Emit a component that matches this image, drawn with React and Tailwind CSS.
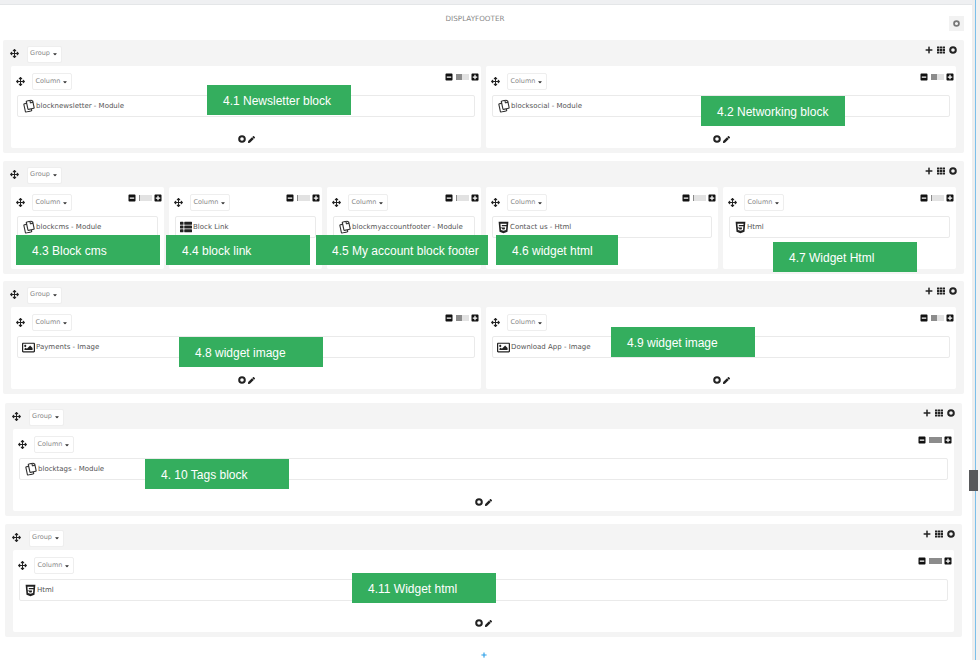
import React from "react";
import {
  FaArrowsAlt,
  FaCaretDown,
  FaHtml5,
  FaMinusSquare,
  FaPen,
  FaPlus,
  FaPlusSquare,
  FaRegCopy,
  FaRegImage,
  FaTh,
  FaThList,
} from "react-icons/fa";

const kindIcons = {
  module: <FaRegCopy className="ml-[1px] mr-[1px] shrink-0 text-[12px] text-[#333] -rotate-12" />,
  html: <FaHtml5 className="shrink-0 text-[13px] text-[#222]" />,
  image: <FaRegImage className="mr-[1px] shrink-0 text-[13px] text-[#222]" />,
  list: <FaThList className="mr-[1px] shrink-0 text-[12px] text-[#222]" />,
};

const labels = [
  { text: "4.1 Newsletter block", cls: "left-[207px] top-[85px] w-[144px]" },
  { text: "4.2 Networking block", cls: "left-[701px] top-[96px] w-[144px]" },
  { text: "4.3 Block cms", cls: "left-[16px] top-[235px] w-[144px]" },
  { text: "4.4 block link", cls: "left-[166px] top-[235px] w-[144px]" },
  { text: "4.5 My account block footer", cls: "left-[316px] top-[235px] w-[172px]" },
  { text: "4.6 widget html", cls: "left-[496px] top-[235px] w-[122px]" },
  { text: "4.7 Widget Html", cls: "left-[773px] top-[242px] w-[144px]" },
  { text: "4.8 widget image", cls: "left-[179px] top-[337px] w-[144px]" },
  { text: "4.9 widget image", cls: "left-[611px] top-[327px] w-[144px]" },
  { text: "4. 10 Tags block", cls: "left-[145px] top-[459px] w-[144px]" },
  { text: "4.11 Widget html", cls: "left-[352px] top-[573px] w-[144px]" },
];

// the settings icon reads as a thick ring at this size
const Ring = ({ className }) => (
  <svg viewBox="0 0 8 8" className={className} fill="none" stroke="currentColor" strokeWidth="2">
    <circle cx="4" cy="4" r="2.8" />
  </svg>
);

const DropButton = ({ label, width }) => (
  <div className={`flex h-[17px] items-center justify-center gap-[2px] rounded-[2px] border border-[#eeeeee] bg-white text-[6.5px] text-[#888] ${width}`}>
    {label}
    <FaCaretDown className="text-[6px] text-[#333]" />
  </div>
);

const WidthBar = ({ level }) => (
  <div className="flex h-[6px] w-[13px] bg-[#e2e2e2]">
    <div className="h-full bg-[#8c8c8c]" style={{ width: `${level * 100}%` }} />
  </div>
);

const Column = ({ width, level, name, kind }) => (
  <div className={`flex h-[82px] flex-col rounded-[2px] bg-white px-[6px] pt-[7px] ${width}`}>
    <div className="flex items-start justify-between">
      <div className="-ml-[1.5px] flex items-center gap-[7.5px]">
        <FaArrowsAlt className="-mt-[1px] text-[9px] text-[#222]" />
        <DropButton label="Column" width="w-[40px]" />
      </div>
      <div className="-mr-[4px] -mt-[0.5px] flex items-center gap-[2.5px]">
        <FaMinusSquare className="text-[8px] text-[#111]" />
        <WidthBar level={level} />
        <FaPlusSquare className="text-[8px] text-[#111]" />
      </div>
    </div>
    <div className="mt-[5px] flex h-[22px] items-center rounded-[2px] border border-[#eaeaea] bg-white pl-[4px] text-[7px] text-[#555]">
      {kindIcons[kind]}
      <span className="whitespace-nowrap">{name}</span>
    </div>
    <div className="mt-[18px] flex items-center justify-center gap-[2px] text-[#222]">
      <Ring className="h-[8px] w-[8px]" />
      <FaPen className="text-[7px]" />
    </div>
  </div>
);

const Group = ({ className, children }) => (
  <section className={`rounded-[2px] bg-[#f4f4f4] px-[8px] pb-[5px] ${className}`}>
    <div className="flex h-[26px] items-center justify-between">
      <div className="-ml-[1px] mt-[2px] flex items-center gap-[7.5px]">
        <FaArrowsAlt className="-mt-[2px] text-[9px] text-[#222]" />
        <DropButton label="Group" width="w-[35px]" />
      </div>
      <div className="mb-[6px] -mr-[1px] flex items-center gap-[4px] text-[#222]">
        <FaPlus className="text-[8px]" />
        <FaTh className="text-[8px]" />
        <Ring className="h-[8px] w-[8px]" />
      </div>
    </div>
    <div className="flex gap-[5px]">{children}</div>
  </section>
);

export default function App() {
  return (
    <div className="relative flex h-[660px] w-[980px] overflow-hidden bg-white font-['DejaVu_Sans',sans-serif]">
      <main className="w-[972px]">
        <div className="h-[5px] border-b border-[#e4e6e8] bg-[#eff0f2]" />
        <header className="relative flex h-[35px] justify-center pt-[9px] pr-[22px] text-[7.2px] text-[#888]">
          DISPLAYFOOTER
          <div className="absolute right-[8px] top-[11px] flex h-[15px] w-[15px] items-center justify-center bg-[#f2f2f2]">
            <Ring className="h-[7px] w-[7px] text-[#777]" />
          </div>
        </header>

        <Group className="ml-[3px] w-[961px]">
          <Column width="w-[470px]" level={0.5} name="blocknewsletter - Module" kind="module" />
          <Column width="w-[470px]" level={0.5} name="blocksocial - Module" kind="module" />
        </Group>

        <Group className="ml-[3px] mt-[8px] w-[961px]">
          <Column width="w-[153px]" level={0.15} name="blockcms - Module" kind="module" />
          <Column width="w-[153px]" level={0.15} name="Block Link" kind="list" />
          <Column width="w-[154px]" level={0.15} name="blockmyaccountfooter - Module" kind="module" />
          <Column width="w-[232px]" level={0.15} name="Contact us - Html" kind="html" />
          <Column width="w-[233px]" level={0.15} name="Html" kind="html" />
        </Group>

        <Group className="ml-[3px] mt-[7px] w-[961px]">
          <Column width="w-[470px]" level={0.5} name="Payments - Image" kind="image" />
          <Column width="w-[470px]" level={0.5} name="Download App - Image" kind="image" />
        </Group>

        <Group className="ml-[5px] mt-[9px] w-[957px]">
          <Column width="w-[941px]" level={1} name="blocktags - Module" kind="module" />
        </Group>

        <Group className="ml-[5px] mt-[8px] w-[957px]">
          <Column width="w-[941px]" level={1} name="Html" kind="html" />
        </Group>

        <div className="flex justify-center pt-[15px] pr-[5px]">
          <FaPlus className="text-[6px] text-[#2b9fe8]" />
        </div>
      </main>

      <div className="w-[3px] bg-[#eeeeee]" />
      <div className="w-[1px] bg-[#7cc0ea]" />
      <div className="flex-1 bg-[#f1f1f1]" />

      <div className="absolute left-[969px] top-[470px] h-[21px] w-[9px] bg-[#58595b]" />

      {labels.map((item) => (
        <div
          key={item.text}
          className={`absolute flex h-[30px] items-center whitespace-nowrap bg-[#34ae5e] pl-[16px] pt-[1px] font-['Liberation_Sans',sans-serif] text-[12px] text-white ${item.cls}`}
        >
          {item.text}
        </div>
      ))}
    </div>
  );
}
